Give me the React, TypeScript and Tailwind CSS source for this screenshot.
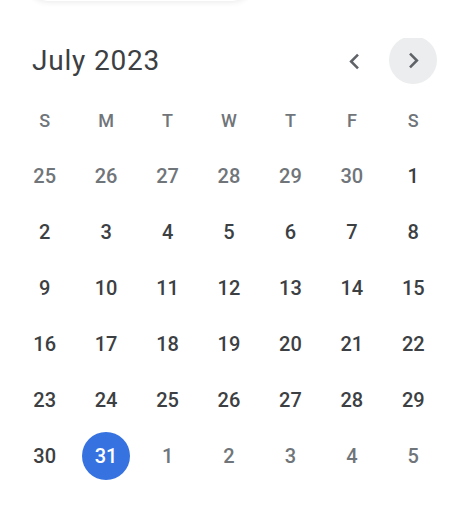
const WEEKDAYS = ["S", "M", "T", "W", "T", "F", "S"]

type Day = { n: number; muted?: boolean; selected?: boolean }

const days: Day[] = [
  ...[25, 26, 27, 28, 29, 30].map((n) => ({ n, muted: true })),
  ...Array.from({ length: 31 }, (_, i) => ({ n: i + 1, selected: i + 1 === 31 })),
  ...[1, 2, 3, 4, 5].map((n) => ({ n, muted: true })),
]

function Chevron({ dir }: { dir: "left" | "right" }) {
  return (
    <svg viewBox="0 0 24 24" className="h-[31px] w-[31px]" fill="#5f6368">
      {dir === "left" ? (
        <path d="M15.41 7.41 14 6l-6 6 6 6 1.41-1.41L10.83 12z" />
      ) : (
        <path d="M8.59 16.59 10 18l6-6-6-6-1.41 1.41L13.17 12z" />
      )}
    </svg>
  )
}

export default function App() {
  return (
    <div
      className="relative h-[524px] w-[462px] overflow-hidden bg-white"
      style={{ fontFamily: "Roboto, 'Noto Sans', sans-serif" }}
    >
      {/* card above, only its shadow shows */}
      <div className="-mt-[40px] ml-[25px] h-[41px] w-[230px] rounded-b-[24px] bg-white shadow-[0_1px_6px_rgba(0,0,0,0.09)]" />

      {/* Header */}
      <div className="mt-[-3px] box-content flex h-[48px] items-center pl-[32px] pr-[25px] pt-[39px]">
        <h2 className="flex-1 text-[28px] font-normal tracking-[0.8px] text-[#3c4043]">July 2023</h2>
        <button className="mr-[11px] flex h-[48px] w-[48px] items-center justify-center rounded-full">
          <Chevron dir="left" />
        </button>
        <div className="flex h-[46px] w-[48px] items-end overflow-hidden">
          <button className="flex h-[48px] w-[48px] shrink-0 items-center justify-center rounded-full bg-[#ecedee]">
            <Chevron dir="right" />
          </button>
        </div>
      </div>

      {/* Grid */}
      <div className="ml-[14px] mt-[7px] grid w-[430px] grid-cols-7">
        {WEEKDAYS.map((d, i) => (
          <div key={i} className="flex h-[56px] items-center justify-center text-[18px] font-medium text-[#70757a]">
            {d}
          </div>
        ))}
        {days.map((d, i) => (
          <div key={i} className="flex h-[56px] items-center justify-center">
            <span
              className={`flex h-[48px] w-[48px] items-center justify-center rounded-full text-[20px] font-medium ${
                d.selected ? "bg-[#3673e0] text-white" : d.muted ? "text-[#70757a]" : "text-[#3c4043]"
              }`}
            >
              {d.n}
            </span>
          </div>
        ))}
      </div>
    </div>
  )
}
